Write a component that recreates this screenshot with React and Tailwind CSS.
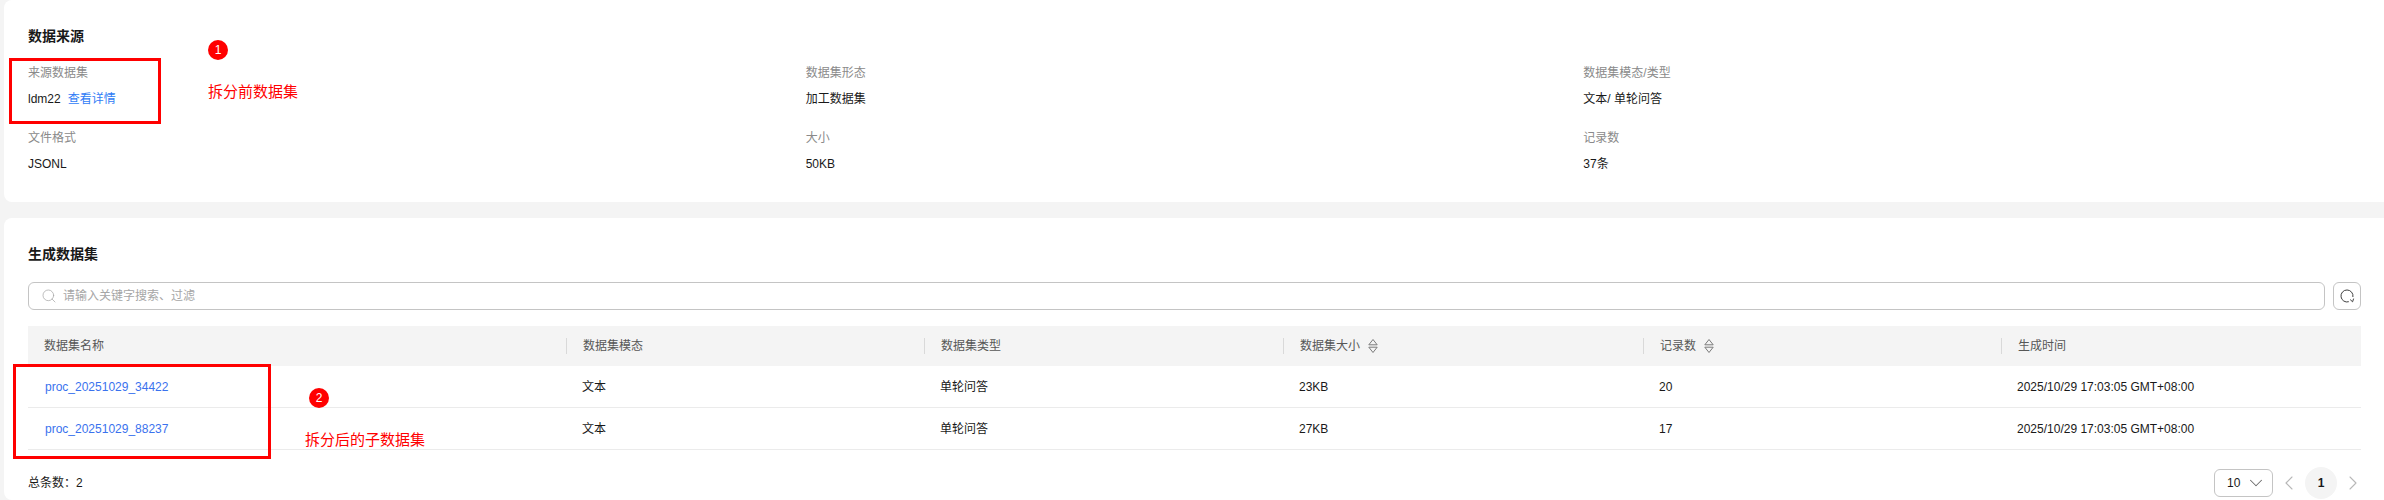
import React from 'react';
import { ChevronDown, ChevronLeft, ChevronRight, Search } from 'lucide-react';

const FONT = "font-['Liberation_Sans','Noto_Sans_CJK_SC',sans-serif]";
const GRID = 'grid grid-cols-[538px_358px_359px_360px_358px_360px]';

const INFO = [
  { label: '来源数据集', value: 'ldm22', link: '查看详情' },
  { label: '数据集形态', value: '加工数据集' },
  { label: '数据集模态/类型', value: '文本/ 单轮问答' },
  { label: '文件格式', value: 'JSONL' },
  { label: '大小', value: '50KB' },
  { label: '记录数', value: '37条' },
];

const COLUMNS = [
  { label: '数据集名称' },
  { label: '数据集模态' },
  { label: '数据集类型' },
  { label: '数据集大小', sort: true },
  { label: '记录数', sort: true },
  { label: '生成时间' },
];

const ROWS = [
  ['proc_20251029_34422', '文本', '单轮问答', '23KB', '20', '2025/10/29 17:03:05 GMT+08:00'],
  ['proc_20251029_88237', '文本', '单轮问答', '27KB', '17', '2025/10/29 17:03:05 GMT+08:00'],
];

function SortIcon() {
  return (
    <svg width="10" height="16" viewBox="0 0 10 16" fill="none" stroke="#7a7a7a" strokeWidth="1" className="ml-2">
      <path d="M0.8 6.8 L5 1.5 L9.2 6.8 Z" />
      <path d="M0.8 9.2 L5 14.5 L9.2 9.2 Z" />
    </svg>
  );
}

function RefreshIcon() {
  return (
    <svg width="16" height="16" viewBox="0 0 16 16" fill="none" stroke="#3f3f3f" strokeWidth="1">
      <path d="M9.8 13.7 A6 6 0 1 1 13.9 9" />
      <path d="M11.2 11.6 L13.6 13.8 L14.6 10.6" />
    </svg>
  );
}

function Callout({ number, text, className, textClass }) {
  return (
    <div className={`absolute ${className}`}>
      <div className="flex h-5 w-5 items-center justify-center rounded-full bg-[#ff0000] text-xs leading-none text-white">
        {number}
      </div>
      <div className={`absolute whitespace-nowrap text-[15px] leading-5 text-[#ff0000] ${textClass}`}>{text}</div>
    </div>
  );
}

export default function App() {
  return (
    <div className={`${FONT} relative h-[500px] w-[2384px] overflow-hidden bg-[#f4f4f4] pl-1 text-xs text-[#191919]`}>
      {/* Source dataset */}
      <section className="h-[202px] w-[2400px] rounded-lg bg-white px-6 pt-[26px]">
        <h2 className="h-5 text-sm font-bold leading-5">数据来源</h2>
        <div className="mt-5 grid w-[2333px] grid-cols-3 gap-y-[25px]">
          {INFO.map((item) => (
            <div key={item.label} className="h-10">
              <div className="leading-[14px] text-[#8a8a8a]">{item.label}</div>
              <div className="mt-3 leading-[14px]">
                {item.value}
                {item.link && <span className="ml-[7px] text-[#2f7cf6]">{item.link}</span>}
              </div>
            </div>
          ))}
        </div>
      </section>

      {/* Generated datasets */}
      <section className="mt-4 h-[282px] w-[2400px] rounded-lg bg-white px-6 pt-[26px]">
        <h2 className="h-5 text-sm font-bold leading-5">生成数据集</h2>

        <div className="mt-[18px] flex w-[2333px] gap-2">
          <div className="flex h-7 flex-1 items-center rounded-md border border-[#c4c4c4] pl-3 text-[#a6a6a6]">
            <Search size={16} strokeWidth={1.1} className="text-[#a6a6a6]" />
            <span className="ml-[6px]">请输入关键字搜索、过滤</span>
          </div>
          <div className="flex h-7 w-7 items-center justify-center rounded-md border border-[#c4c4c4]">
            <RefreshIcon />
          </div>
        </div>

        <div className="mt-4 w-[2333px]">
          <div className={`${GRID} h-10 items-center bg-[#f4f4f4] text-[#575757]`}>
            {COLUMNS.map((col, i) => (
              <div key={col.label} className={`flex h-4 items-center pl-4 ${i > 0 ? 'border-l border-[#d9d9d9]' : ''}`}>
                {col.label}
                {col.sort && <SortIcon />}
              </div>
            ))}
          </div>
          {ROWS.map((row) => (
            <div key={row[0]} className={`${GRID} h-[42px] items-center border-b border-[#ebebeb]`}>
              {row.map((cell, i) => (
                <div key={i} className={i === 0 ? 'pl-[17px] text-[#3a72ee]' : 'pl-4'}>
                  {cell}
                </div>
              ))}
            </div>
          ))}
        </div>

        <div className="mt-[17px] flex w-[2333px] items-center justify-between">
          <span>总条数：2</span>
          <div className="-mr-1 flex items-center">
            <div className="flex h-7 w-[59px] items-center justify-between rounded-md border border-[#c4c4c4] pl-3 pr-[5px]">
              10
              <ChevronDown size={22} strokeWidth={1.1} className="text-[#6b6b6b]" />
            </div>
            <ChevronLeft size={24} strokeWidth={1.1} className="ml-1 text-[#b8b8b8]" />
            <div className="ml-1 flex h-8 w-8 items-center justify-center rounded-full bg-[#f4f4f4] font-bold">1</div>
            <ChevronRight size={24} strokeWidth={1.1} className="ml-1 text-[#b8b8b8]" />
          </div>
        </div>
      </section>

      {/* Red annotations drawn over the page */}
      <div className="absolute left-[9px] top-[58px] h-[66px] w-[152px] border-[3px] border-[#ff0000]" />
      <Callout number="1" text="拆分前数据集" className="left-[208px] top-10" textClass="left-0 top-[42px]" />
      <div className="absolute left-[13px] top-[364px] h-[95px] w-[258px] border-[3px] border-[#ff0000]" />
      <Callout number="2" text="拆分后的子数据集" className="left-[309px] top-[388px]" textClass="left-[-4px] top-[42px]" />
    </div>
  );
}
